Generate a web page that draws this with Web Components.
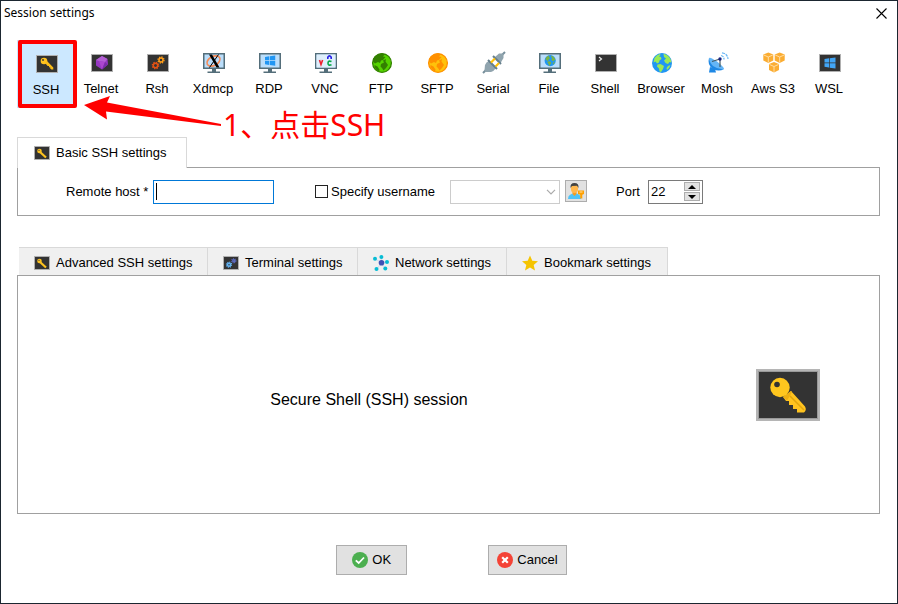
<!DOCTYPE html>
<html lang="en">
<head>
<meta charset="utf-8">
<title>Session settings</title>
<style>
html,body{margin:0}
body{font:13px/16px "Liberation Sans",Arial,sans-serif;color:#000;background:#fff}
</style>
</head>
<body>
<session-window></session-window>
<script>
const frame = '<rect x=".5" y="2.5" width="21" height="17" fill="#333" stroke="#b0b0b0"/>';
const key = '<circle cx="8" cy="8" r="3.3" fill="#ffc31f"/><path d="M9 10L11 8L17.3 14.5V16.5H15.5L14.3 15.8V14.5L13 14.3V13L11.7 12.9Z" fill="#fbbd18"/><circle cx="7" cy="7" r=".9" fill="#333"/>';
const monitor = '<path d="M0 1h22v16H0z" fill="#546e7a"/><path d="M1.5 2.500h19v13h-19z" fill="#bbdefb"/><path d="M9 17h4v2.500h4V21H4.500v-1.500H9z" fill="#546e7a"/>';
const land = '<path d="M3.500 6Q6 2.500 9 2L9.500 3L8 4.500L10 5L10.500 7L8.500 8.500L8 10.500L6 11.500L4.500 9.500L2.500 10.500ZM12.500 1.700Q17 2.500 19.500 7L20.500 10.500L18.500 10L17 12L14.500 11L13 8.500L15 6.500L13 5ZM6.500 12.500L9.500 12L13 14L12 17L10 20L8.500 19.500L8 16.500L6 14.500ZM17 14L19.500 13Q18.500 16.500 16 18L15.500 16Z"/>';
const globe = (sea, ground) => `<circle cx="11" cy="11" r="10" fill="${sea}"/><g fill="${ground}">${land}</g>`;
const ringGlobe = (sea, ground) => `<circle cx="11" cy="11" r="9.400" fill="${sea}" stroke="${ground}" stroke-width="1.300"/><path fill="${ground}" d="M2 7Q5 2 10 1.500L14 2L12 4.500L14.500 5L12 8L10 8.500L9 11L7 10L4 11.500L2 9.500ZM10 12L13 10.500L12 8.500L15 7L14.500 9.500L17 13L15 16L12.500 18.500L11 16L9.500 14.500ZM3.500 13L6.500 14.500L8.500 17.500L8 19.500Q5 18 3.500 15Z"/>`;
const gear = (x, y, r, c) => `<g transform="translate(${x} ${y})" fill="none" stroke="${c}"><circle r="${r}" stroke-width="1.500"/><circle r="${r + 1}" stroke-width="1.300" stroke-dasharray="${(r + 1) * .42} ${(r + 1) * .3654}"/></g>`;
const win = (x, y, s, c) => `<g transform="translate(${x} ${y}) scale(${s})" fill="${c}"><path d="M0 1.500L4.500.800V5H0zM5.200.700L11 0V5H5.200zM0 5.700H4.500V10L0 9.300zM5.200 5.700H11V11L5.200 10.200z"/></g>`;
const box = (x, y) => `<g transform="translate(${x} ${y})"><path d="M0 2L5 0L10 2V8L5 10.500L0 8z" fill="#fbad32"/><path d="M.500 2.500L5 4.500L9.500 2.500M5 4.500V10" fill="none" stroke="#ffe2b0" stroke-width=".9"/></g>`;
const dot = (x, y, c, r) => `<circle cx="${x}" cy="${y}" r="${r}" fill="${c}"/>`;
const ICONS = {
  ssh: [22, 22, frame + key],
  telnet: [22, 22, frame + '<path d="M11 4L16.500 7L17 12.500L11 17.500L5 13.500V8z" fill="#9638c3"/><path d="M11 4L8 9L5 8zM11 4L8 9L14 10L16.500 7z" fill="#b45fd4"/><path d="M8 9L11 17.500L14 10z" fill="#ab47ce"/><path d="M14 10L17 12.500L11 17.500z" fill="#7b2da8"/>'],
  rsh: [22, 22, frame + gear(8.5, 13.5, 2.2, '#e35214') + gear(14, 8, 2, '#ff9d18')],
  xdmcp: [22, 22, monitor + '<ellipse cx="10.500" cy="9" rx="7" ry="4.500" transform="rotate(-28 10.500 9)" fill="none" stroke="#f58a55" stroke-width="1.600"/><path d="M6 2.500H9L16.500 15.500H13.500z"/><path d="M15.500 2.500L6.500 15.500" stroke="#000"/>'],
  rdp: [22, 22, monitor + win(6, 3.6, .93, '#2196f3')],
  vnc: [22, 22, monitor + '<path d="M1.500 2.500h19v13h-19z" fill="#deeffc"/><g fill="none" stroke-width="1.600"><path d="M4.500 8L6 12.500L7.600 8" stroke="#f02030"/><path d="M12.800 7V5.200Q14.500 2.500 16.200 5.200V7" stroke="#2820e8"/><path d="M16.500 9.600Q13 8.200 13 11.200Q13 14 16.500 12.800" stroke="#06a744"/></g>'],
  ftp: [22, 22, ringGlobe('#55d400', '#338000')],
  sftp: [22, 22, ringGlobe('#ffc20a', '#ff9000')],
  serial: [22, 22, '<path d="M0 21L4 17M18 4L22 0" stroke="#78909c" stroke-width="2"/><path d="M2 13Q3 10 6 9L13 16Q11 19 8 20H3L1.500 18z" fill="#90a4ae"/><path d="M12 5L16 1.500H20.500V6L17 12Z" fill="#90a4ae"/><path d="M5 8L14 17M10 4L18 12" stroke="#667f8c" stroke-width="2"/><path d="M8 10.500L12 6.500M12.500 14.500L16 11" stroke="#ffc107" stroke-width="2.200"/>'],
  file: [22, 22, monitor + '<g transform="translate(5 2.500) scale(.56)">' + globe('#2196f3', '#7cb342') + '</g>'],
  shell: [22, 22, '<path d="M.5 2.500h21v17H.5z" fill="#333" stroke="#b0b0b0"/><path d="M4 5L6.500 7L4 9" fill="none" stroke="#eee" stroke-width="1.200"/>'],
  browser: [22, 22, globe('#2196f3', '#9bea55')],
  mosh: [22, 22, '<path d="M3 15L8 17L9 20.500H2z" fill="#1e88e5"/><path d="M2 6Q0 13 6 17Q12 20 17 17Q8 13 2 6z" fill="#1e88e5"/><path d="M2 6Q3 4.500 10 9.500Q17 15 17 17Q12 18 6 14Q2 10 2 6z" fill="#64b5f6"/><path d="M5 9.500L13 7V15" fill="none" stroke="#455a64" stroke-width="1.200"/><circle cx="13" cy="7" r="1.700" fill="#1a237e"/><path d="M14 3.500Q17 4 17 7.500M15 .8Q20.500 1.500 21 7" fill="none" stroke="#64b5f6" stroke-width="1.200" stroke-dasharray="3 .8"/>'],
  aws: [22, 22, box(.3, .5) + box(11.7, .5) + box(6, 10)],
  wsl: [22, 22, frame + win(5.5, 5.5, 1, '#42a5f5')],
  key: [16, 14, '<path d="M.5.500h15v13H.5z" fill="#333" stroke="#b0b0b0"/><circle cx="5.500" cy="5" r="2.300" fill="#ffc31f"/><path d="M6 6L12 11.500" stroke="#ffc31f" stroke-width="2.200"/><circle cx="5" cy="4.300" r=".6" fill="#333"/>'],
  gears: [16, 14, '<path d="M.5.500h15v13H.5z" fill="#333" stroke="#b0b0b0"/>' + gear(6, 8.7, 1.5, '#64b5f6') + gear(10.8, 4.8, 1, '#5c6bc0')],
  network: [16, 16, '<path d="M8.500 7.500L2 4M8.500 7.500L8 2M8.500 7.500L14 7M8.500 7.500L12.500 14M8.500 7.500L4 14" stroke="#c9dcf0"/>' + dot(8.5, 7.8, '#3f51b5', 2.8) + [[2, 3.8], [8.4, 2], [14, 7], [12.3, 13.5], [3.5, 14]].map(p => dot(...p, '#08bcd4', 2)).join('')],
  star: [16, 16, '<path d="M8 .5L10.300 5.700L16 6.300L11.700 10L13 15.500L8 12.600L3 15.500L4.300 10L0 6.300L5.700 5.700z" fill="#f5c400"/>'],
  user: [18, 18, '<path d="M1 17Q1 11.500 8 11.500Q14 11.500 14 17z" fill="#4fc3f7"/><path d="M5.500 10H9.500V12L7.500 14L5.500 12z" fill="#f59b20"/><ellipse cx="7.500" cy="6.500" rx="3.600" ry="4.500" fill="#ffb74d"/><path d="M3.500 6Q3 1 7.500 1Q12 1 11.500 6L10 3.800L5 4z" fill="#424242"/><path d="M11 8.500H17V12L15.300 12.800V16.500H13.200V12.800L11 12z" fill="#ffa000"/><path d="M12.500 10H15.500" stroke="#fff3d0" stroke-width=".8"/>'],
  ok: [16, 16, '<circle cx="8" cy="8" r="8" fill="#4caf50"/><path d="M3.800 8.300L6.700 11L12 5.500" fill="none" stroke="#fff" stroke-width="1.800"/>'],
  cancel: [16, 16, '<circle cx="8" cy="8" r="8" fill="#f44336"/><path d="M5.200 5.200L10.800 10.800M10.800 5.200L5.200 10.800" stroke="#fff" stroke-width="2.200"/>'],
  bigkey: [64, 52, '<path d="M0 0h64v52H0z" fill="#b5b5b5"/><path d="M2.500 2.500h59v47h-59z" fill="#333" stroke="#999"/><path d="M27 28L35 22L49 37.500Q51 41 48 43.500H41V40H37V36H33V32H30z" fill="#ffc31f"/><path d="M27 28L35 22L36 23L31 31.500z" fill="#edae12"/><path d="M34 27L48 41" stroke="#e2a50d" stroke-width="1.500"/><circle cx="24" cy="18.500" r="9.700" fill="#ffc61e"/><circle cx="21" cy="15.500" r="2.800" fill="#333"/>'],
  close: [11, 11, '<path d="M.5.500L10.500 10.500M10.500.500L.500 10.500" stroke="#000" stroke-width="1.100"/>'],
  chevron: [10, 6, '<path d="M1 .800L5 4.800L9 .800" fill="none" stroke="#aaa" stroke-width="1.200"/>'],
  up: [8, 4, '<path d="M4 0L8 4H0z"/>'],
  down: [8, 4, '<path d="M0 0H8L4 4z"/>'],
  arrow: [137, 26, '<path d="M0 10L26 1L23 7.500L137 29V31L22 16.500L23 24.500z" fill="#f00"/>']
};

function define(name, html, setup) {
  const t = document.createElement('template');
  t.innerHTML = html;
  customElements.define(name, class extends HTMLElement {
    connectedCallback() {
      if (this.shadowRoot) return;
      this.attachShadow({mode: 'open'}).append(t.content.cloneNode(true));
      if (setup) setup(this, this.shadowRoot);
    }
  });
}

define('ui-icon', '<style>:host{display:inline-flex;flex:none}svg{display:block;overflow:visible}</style>', (el, root) => {
  const [w, h, art] = ICONS[el.getAttribute('name')];
  root.innerHTML += `<svg width="${w}" height="${h}" viewBox="0 0 ${w} ${h}" aria-hidden="true">${art}</svg>`;
});

define('title-bar', `<style>
:host{display:flex;justify-content:space-between;align-items:center;height:24px;padding:0 10px 0 3px;font:12px/16px "Noto Sans",sans-serif}
h1{font:inherit;margin:0}
button{border:0;background:none;padding:0;display:flex}
</style><h1><slot></slot></h1><button aria-label="Close"><ui-icon name="close"></ui-icon></button>`);

define('session-type', `<style>
:host{display:block;width:56px;flex:none}
button{font:inherit;color:inherit;border:0;padding:12px 0 0;width:100%;height:68px;background:none;display:flex;flex-direction:column;align-items:center;gap:7px;white-space:nowrap}
::slotted(ui-icon){padding-left:2px}
:host([selected]){width:58px;margin-right:-2px}
:host([selected]) button{background:#cce8ff;padding-top:13px}
</style><button><slot name="icon"></slot><slot></slot></button>`);

define('session-toolbar', `<style>:host{display:flex;padding:0 16px}</style><slot></slot>`);

define('tab-button', `<style>
:host{display:block;min-width:var(--w);box-sizing:border-box}
button{font:inherit;color:inherit;width:100%;height:28px;padding:2px 14px 0 15px;border:solid #d9d9d9;border-width:1px 1px 0 0;background:#f0f0f0;display:flex;align-items:center;gap:6px;white-space:nowrap}
:host([selected]){position:relative;z-index:1;margin-bottom:-1px}
:host([selected]) button{background:#fff;height:31px;border-left-width:1px;padding:0 16px}
</style><button role="tab"><slot name="icon"></slot><slot></slot></button>`);

define('tab-group', `<style>
:host{display:flex;flex-direction:column;margin:0 17px 0 16px}
.tabs{display:flex}
:host([inset]) .tabs{padding-left:2px}
.panel{border:1px solid #a0a0a0;flex:1;display:flex;align-items:center;min-height:47px}
</style><div class="tabs" role="tablist"><slot name="tab"></slot></div><div class="panel" role="tabpanel"><slot></slot></div>`);

define('basic-form', `<style>
:host{display:flex;align-items:center;padding-left:48px}
*{box-sizing:border-box}
input,select,button{font:inherit;color:inherit;margin:0;border-radius:0}
.host{min-width:83px;margin-right:4px}
.text{width:121px;height:24px;border:1px solid #0078d7;outline:0;padding:1px 4px;caret-color:transparent;background:linear-gradient(#000,#000) 2px 2px/1px 17px no-repeat #fff}
.check{display:flex;align-items:center;gap:3px;margin-left:41px;min-width:135px}
.check input{appearance:none;width:13px;height:13px;border:1px solid #222;background:#fff}
.combo{display:grid;align-items:center;width:110px;margin-right:5px}
.combo>*{grid-area:1/1}
select{appearance:none;width:100%;height:24px;border:1px solid #ccc;background:#fff;opacity:1}
.combo ui-icon{justify-self:end;margin-right:4px;pointer-events:none;z-index:1}
.user{width:22px;height:22px;padding:0;border:1px solid #adadad;background:#e1e1e1;display:flex;align-items:center;justify-content:center;margin-bottom:2px}
.port{margin-left:29px;min-width:24px;margin-right:8px}
.spin{display:flex;align-items:center;width:55px;height:24px;border:1px solid #7a7a7a;padding-right:2px}
.spin input{flex:1;min-width:0;border:0;padding:0 0 0 2px;background:none;outline:0}
.arrows{display:grid;gap:1px}
.arrows button{width:16px;height:9px;padding:0;border:1px solid #adadad;background:#e1e1e1;display:flex;align-items:center;justify-content:center}
</style>
<label class="host" for="h">Remote host *</label><input class="text" id="h" type="text">
<label class="check"><input type="checkbox">Specify username</label>
<div class="combo"><select disabled aria-label="Username"></select><ui-icon name="chevron"></ui-icon></div>
<button class="user" aria-label="Manage users"><ui-icon name="user"></ui-icon></button>
<label class="port" for="p">Port</label>
<div class="spin"><input id="p" type="text" inputmode="numeric" value="22"><div class="arrows"><button aria-label="Increase"><ui-icon name="up"></ui-icon></button><button aria-label="Decrease"><ui-icon name="down"></ui-icon></button></div></div>`);

define('session-summary', `<style>
:host{display:flex;align-items:center;flex:1;gap:36px;padding-right:59px;font-size:16px;line-height:20px}
p{margin:0;flex:1;text-align:center;padding-top:10px}
</style><p><slot></slot></p><ui-icon name="bigkey"></ui-icon>`);

define('action-button', `<style>
button{font:inherit;color:inherit;height:30px;padding:0 8px;min-width:71px;border:1px solid #adadad;background:#e1e1e1;display:flex;align-items:center;justify-content:center;gap:4px}
</style><button><slot name="icon"></slot><slot></slot></button>`);

define('click-hint', `<style>
:host{display:block;position:absolute;inset:0;pointer-events:none;color:#f00}
.box{position:absolute;left:17px;top:39px;width:59px;height:68px;box-sizing:border-box;border:4px solid #f00;border-radius:2px}
ui-icon{position:absolute;left:83px;top:94px}
span{position:absolute;left:222px;top:104px;font:30px/40px "Noto Sans","Noto Sans CJK SC",sans-serif;white-space:nowrap}
</style><div class="box"></div><ui-icon name="arrow"></ui-icon><span><slot></slot></span>`);

const types = [['ssh','SSH'],['telnet','Telnet'],['rsh','Rsh'],['xdmcp','Xdmcp'],['rdp','RDP'],['vnc','VNC'],['ftp','FTP'],['sftp','SFTP'],['serial','Serial'],['file','File'],['shell','Shell'],['browser','Browser'],['mosh','Mosh'],['aws','Aws S3'],['wsl','WSL']];
define('session-window', `<style>
:host{display:flex;flex-direction:column;position:relative;box-sizing:border-box;min-height:100vh;border:1px solid #1b2630;background:#fff}
session-toolbar{margin:15px 0 29px}
.more{flex:1;margin-top:31px}
footer{display:flex;justify-content:center;gap:81px;padding:31px 0 28px 5px}
</style>
<title-bar>Session settings</title-bar>
<session-toolbar>${types.map(([i, t], n) => `<session-type${n ? '' : ' selected'}><ui-icon slot="icon" name="${i}"></ui-icon>${t}</session-type>`).join('')}</session-toolbar>
<tab-group>
<tab-button slot="tab" selected style="--w:170px"><ui-icon slot="icon" name="key"></ui-icon>Basic SSH settings</tab-button>
<basic-form></basic-form>
</tab-group>
<tab-group class="more" inset>
<tab-button slot="tab" style="--w:189px"><ui-icon slot="icon" name="key"></ui-icon>Advanced SSH settings</tab-button>
<tab-button slot="tab" style="--w:150px"><ui-icon slot="icon" name="gears"></ui-icon>Terminal settings</tab-button>
<tab-button slot="tab" style="--w:149px"><ui-icon slot="icon" name="network"></ui-icon>Network settings</tab-button>
<tab-button slot="tab" style="--w:161px"><ui-icon slot="icon" name="star"></ui-icon>Bookmark settings</tab-button>
<session-summary>Secure Shell (SSH) session</session-summary>
</tab-group>
<footer><action-button><ui-icon slot="icon" name="ok"></ui-icon>OK</action-button><action-button><ui-icon slot="icon" name="cancel"></ui-icon>Cancel</action-button></footer>
<click-hint>1、点击SSH</click-hint>`);
</script>
</body>
</html>
